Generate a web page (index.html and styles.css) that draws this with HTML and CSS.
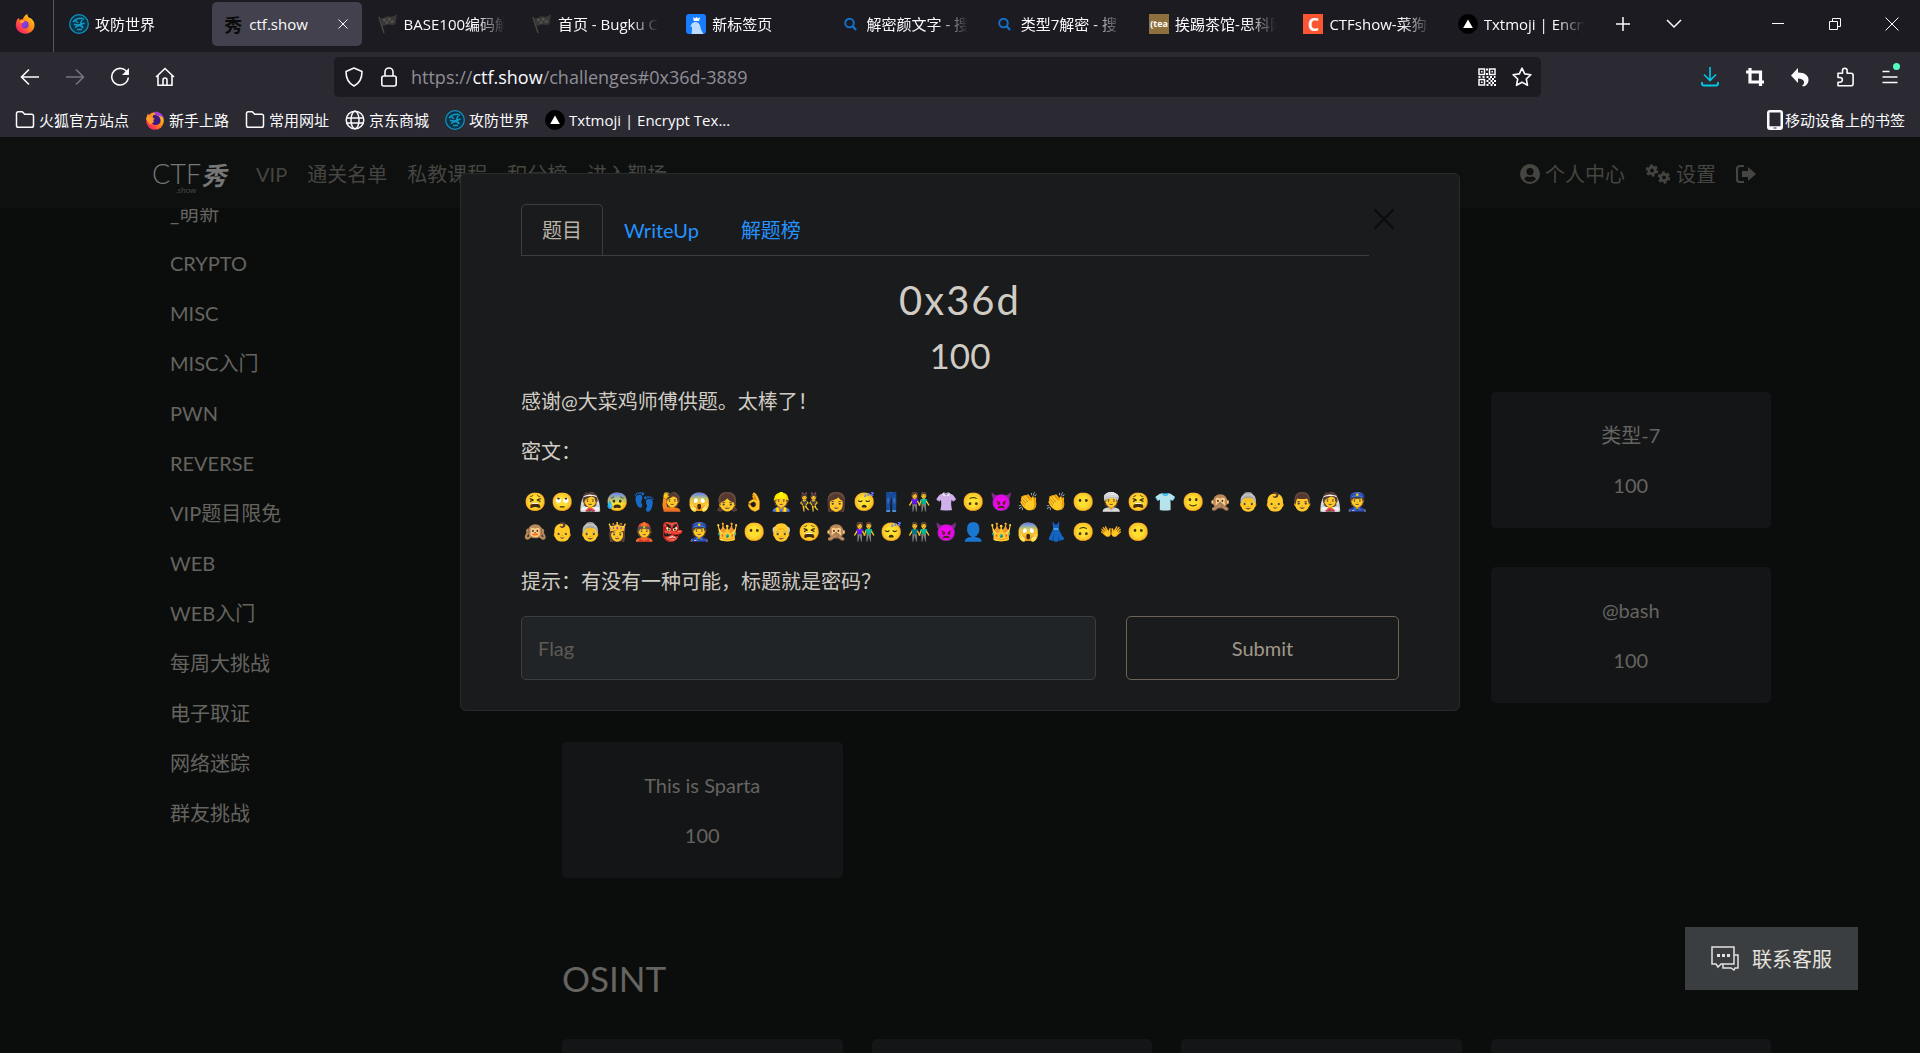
FILE: index.html
```html
<!DOCTYPE html>
<html lang="zh-CN">
<head>
<meta charset="utf-8">
<title>ctf.show</title>
<link rel="stylesheet" href="styles.css">
</head>
<body>
<svg class="defs" aria-hidden="true">
  <defs>
    <linearGradient id="fire" x1="1" y1="0" x2="0" y2="1"><stop offset="0" stop-color="#ffe226"/><stop offset=".45" stop-color="#ff8a16"/><stop offset=".75" stop-color="#ff3750"/><stop offset="1" stop-color="#e31587"/></linearGradient>
    <linearGradient id="violet" x1="0" y1="0" x2="1" y2="1"><stop offset="0" stop-color="#b833e1"/><stop offset="1" stop-color="#5b3fd0"/></linearGradient>
  </defs>
  <symbol id="i-firefox" viewBox="0 0 20 20"><path fill="url(#fire)" d="M12.500 0c-.3 1.500.4 2.700 1.600 3.800 2.700.600 5.400 3.500 5.400 7.200 0 4.800-4 8.800-9.200 8.800S.800 15.800.800 11c0-3 1-5.300 2.700-7.200.2 1 .5 1.500 1 2 .8-.6 2-.8 3.300-.6C8.600 2.800 10.300.9 12.500 0z"/><circle cx="10" cy="10.800" r="3.700" fill="url(#violet)"/><path fill="#ffb72b" d="M5 7.500c1.500-1 3.300-.8 4.600.2-1.500.2-2 1.300-3.100 1.600z"/></symbol>
  <symbol id="i-firefox-round" viewBox="0 0 20 20"><circle cx="10" cy="11" r="8.800" fill="url(#fire)"/><path fill="#3b1d82" d="M8 5.500c4-1.500 8 1.500 7.500 6-.5 3-4 4.500-7 3-2.500-1.500-2.500-4-1-5.500z"/><path fill="#a53bd8" d="M11 1.500c4.500.6 7.500 3.700 8 7.500-2-2.800-4.500-3.500-7-3.500C9 5.500 9 2.500 11 1.500z"/><path fill="#ff9a2b" d="M3 3c0 2 1 3 3 3.500L10 9c-2 0-2 1.800-1 2.700L5 15 1 9z"/></symbol>
  <symbol id="i-world" viewBox="0 0 20 20"><circle cx="10" cy="10" r="9.300" fill="#0a3346" stroke="#0f8fbd" stroke-width="1.300"/><path d="M4 8c3-4 8-4.500 11-2.500M5 10c3 1.800 7 .8 10.500-1M6 13.500c3-2.500 6-2.500 8.500 0M5.500 6l3.500 3M13 6l-2 5 3 3M8 15.500h5" fill="none" stroke="#139cc9" stroke-width="1.500"/></symbol>
  <symbol id="i-flag" viewBox="0 0 20 20"><path d="M1 3l5 16" stroke="#474640" stroke-width="1.500"/><path fill="#393836" d="M2.500 4c3 1.500 6-3 9-1.500 2.500 1 5-1 7.500-2l-1.500 9.500c-3 2-5 .5-7 .5-2.500 0-4 2-6 1.500z"/><path fill="#55544f" d="M5 5l2.500-.5.500 2.500-2.500.5zM10 4h2.500v2.500L10 6.500zM7.500 8l2.500-1 .5 2-2.500 1zM13 6.500l3-.5-.5 2.500-3 .5z"/></symbol>
  <symbol id="i-newtab" viewBox="0 0 20 20"><rect width="20" height="20" rx="3" fill="#187cff"/><path fill="#fff" d="M7 3l2 1.500L10.500 3 12 4.500 14 3l-.8 4H7.800z"/><path fill="#bcdcff" d="M5 11.500c.8-4.500 7.500-5 9 0 .6 3 1 5 3.500 8.500H5.500c.5-2 .5-4 .5-7.500l-2 .2z"/></symbol>
  <symbol id="i-search" viewBox="0 0 20 20"><circle cx="8.500" cy="9" r="4.300" fill="none" stroke="#1272cc" stroke-width="1.900"/><path d="M11.500 12l3.500 4" stroke="#1272cc" stroke-width="2.200"/></symbol>
  <symbol id="i-moji" viewBox="0 0 20 20"><circle cx="10" cy="10" r="10" fill="#000"/><path d="M10 5.500l4.800 8.500H5.200z" fill="#fff"/></symbol>
  <symbol id="i-folder" viewBox="0 0 20 20"><path d="M1.500 15.500v-12a1.800 1.800 0 0 1 1.800-1.800h4l2.400 2.600h7a1.800 1.800 0 0 1 1.800 1.800v9.400a1.800 1.800 0 0 1-1.800 1.800H3.300a1.800 1.800 0 0 1-1.800-1.800z" fill="none" stroke="currentColor" stroke-width="1.500"/></symbol>
  <symbol id="i-globe" viewBox="0 0 20 20"><g fill="none" stroke="currentColor" stroke-width="1.500"><circle cx="10" cy="10" r="8.800"/><ellipse cx="10" cy="10" rx="4" ry="8.800"/><path d="M1.500 8h17M1.500 13h17"/></g></symbol>
</svg>

<header class="chrome">
  <div class="tabstrip">
    <button class="pinned" aria-label="Firefox"><svg class="ico"><use href="#i-firefox"/></svg></button>
    <nav class="tabs">
      <button class="tab"><svg class="ico"><use href="#i-world"/></svg><span>攻防世界</span></button>
      <button class="tab active"><i class="brush">秀</i><span>ctf.show</span><svg class="tab-x" viewBox="0 0 10 10"><path d="M.5.5l9 9M9.500.5l-9 9" stroke="currentColor"/></svg></button>
      <button class="tab"><svg class="ico"><use href="#i-flag"/></svg><span>BASE100编码解</span></button>
      <button class="tab"><svg class="ico"><use href="#i-flag"/></svg><span>首页 - Bugku C</span></button>
      <button class="tab"><svg class="ico"><use href="#i-newtab"/></svg><span>新标签页</span></button>
      <button class="tab"><svg class="ico"><use href="#i-search"/></svg><span>解密颜文字 - 搜</span></button>
      <button class="tab"><svg class="ico"><use href="#i-search"/></svg><span>类型7解密 - 搜</span></button>
      <button class="tab"><b class="tea">(tea</b><span>挨踢茶馆-思科网</span></button>
      <button class="tab"><b class="cee">C</b><span>CTFshow-菜狗</span></button>
      <button class="tab"><svg class="ico"><use href="#i-moji"/></svg><span>Txtmoji | Encry</span></button>
    </nav>
    <div class="window-tools">
      <button aria-label="新建标签页"><svg class="ico" viewBox="0 0 20 20"><path d="M10 3v14M3 10h14" stroke="currentColor" stroke-width="1.500"/></svg></button>
      <button aria-label="列出所有标签页"><svg class="ico" viewBox="0 0 20 20"><path d="M3 6l7 7 7-7" fill="none" stroke="currentColor" stroke-width="1.500"/></svg></button>
      <span class="grow"></span>
      <button class="win" aria-label="最小化"><svg class="ico" viewBox="0 0 20 20"><path d="M4 9.500h12" stroke="currentColor"/></svg></button>
      <button class="win" aria-label="还原"><svg class="ico" viewBox="0 0 20 20"><path d="M4.500 7.500h8v8h-8zM7.500 7V4.500h8v8H13" fill="none" stroke="currentColor"/></svg></button>
      <button class="win" aria-label="关闭"><svg class="ico" viewBox="0 0 20 20"><path d="M3.500 3.500l13 13M16.500 3.500l-13 13" stroke="currentColor"/></svg></button>
    </div>
  </div>

  <div class="toolbar">
    <div class="nav-buttons">
      <button aria-label="后退"><svg class="ico" viewBox="0 0 20 20"><path d="M19 10H2M9 2.500L1.500 10 9 17.500" fill="none" stroke="currentColor" stroke-width="1.600"/></svg></button>
      <button class="dim" aria-label="前进"><svg class="ico" viewBox="0 0 20 20"><path d="M1 10h17M11 2.500l7.500 7.500-7.500 7.500" fill="none" stroke="currentColor" stroke-width="1.600"/></svg></button>
      <button aria-label="刷新"><svg class="ico" viewBox="0 0 20 20"><path d="M17.500 6A8.300 8.300 0 1 0 18.300 10.500" fill="none" stroke="currentColor" stroke-width="1.600"/><path d="M19 1v7h-7z" fill="currentColor"/></svg></button>
      <button aria-label="主页"><svg class="ico" viewBox="0 0 20 20"><path d="M1 10l9-8.500 9 8.500M3 8.500v9.700h14V8.500M8 18v-5a2 2 0 0 1 4 0v5" fill="none" stroke="currentColor" stroke-width="1.600"/></svg></button>
    </div>
    <div class="urlbar">
      <svg class="ico" viewBox="0 0 20 20"><path d="M10 1l8 3.500c0 7-2 11.500-8 14.500C4 16 2 11.500 2 4.500z" fill="none" stroke="currentColor" stroke-width="1.600" stroke-linejoin="round"/></svg>
      <svg class="ico" viewBox="0 0 20 20"><rect x="2.800" y="9" width="14.400" height="10" rx="2" fill="none" stroke="currentColor" stroke-width="1.600"/><path d="M6 9V5a4 4 0 0 1 8 0v4" fill="none" stroke="currentColor" stroke-width="1.600"/></svg>
      <a class="url" href="#0x36d-3889">https://<b>ctf.show</b>/challenges#0x36d-3889</a>
      <svg class="ico" viewBox="0 0 20 20"><g fill="none" stroke="currentColor" stroke-width="1.500"><path d="M2 2h5.500v5.500H2zM12.500 2H18v5.500h-5.500zM2 12.500h5.500V18H2z"/></g><path fill="currentColor" d="M4 4h1.500v1.500H4zM14.500 4H16v1.500h-1.500zM4 14.500h1.500V16H4zM9 1.500h2v2H9zM9 6h2v2H9zM1.500 9h2v2h-2zM5.500 9h2v2h-2zM9.500 9h2v2h-2zM13 9h2v2h-2zM17 9h1.500v2H17zM11.500 11h2v2h-2zM15 11h2v2h-2zM9.500 13h2v2h-2zM13.500 13h2v2h-2zM17 13h2v2h-2zM11.500 15h2v2h-2zM15 15h2v2h-2zM9.500 17h2v2h-2zM13.500 17h2v2h-2zM17 17h2v2h-2z"/></svg>
      <svg class="ico" viewBox="0 0 20 20"><path d="M10 1.200l2.700 5.700 6.200.8-4.600 4.300 1.200 6.300-5.500-3.100-5.500 3.100L5.700 12 1.100 7.700l6.200-.8z" fill="none" stroke="currentColor" stroke-width="1.600" stroke-linejoin="round"/></svg>
    </div>
    <div class="nav-buttons tools">
      <button class="cyan" aria-label="下载"><svg class="ico" viewBox="0 0 20 20"><path d="M10 0v13M4 7.500l6 6 6-6" fill="none" stroke="currentColor" stroke-width="1.600"/><path d="M2 15v1.500a2 2 0 0 0 2 2h12a2 2 0 0 0 2-2V15" fill="none" stroke="currentColor" stroke-width="1.900"/></svg></button>
      <button aria-label="截图"><svg class="ico" viewBox="0 0 20 20"><path d="M1 5h14.500v14M5 1v14h14" fill="none" stroke="currentColor" stroke-width="3.200"/></svg></button>
      <button aria-label="撤销"><svg class="ico" viewBox="0 0 20 20"><path fill="currentColor" d="M8 1v4.500c7 0 11 3.500 10.500 8-.2 2.300-1.700 4.300-3.500 5.500-1.500.5-2.500.2-3-.3 3.500-1.700 3-7.200-4-7.200V16L1 8.500z"/></svg></button>
      <button aria-label="扩展"><svg class="ico" viewBox="0 0 20 20"><path d="M3 9V6.200h4.500V3.500a2.300 2.300 0 0 1 4.600 0v2.700h4a2 2 0 0 1 2 2v8.500a2 2 0 0 1-2 2H3v-3.500h2a2.300 2.300 0 0 0 0-4.700H3z" fill="none" stroke="currentColor" stroke-width="1.600" stroke-linejoin="round"/></svg></button>
      <button class="menu" aria-label="菜单"><svg class="ico" viewBox="0 0 20 20"><path d="M2.500 4.500h7M2.500 10h15M2.500 15.500h15" stroke="currentColor" stroke-width="1.600"/></svg></button>
    </div>
  </div>

  <nav class="bookmarks">
    <a href="#"><svg class="ico"><use href="#i-folder"/></svg>火狐官方站点</a>
    <a href="#"><svg class="ico"><use href="#i-firefox-round"/></svg>新手上路</a>
    <a href="#"><svg class="ico"><use href="#i-folder"/></svg>常用网址</a>
    <a href="#"><svg class="ico"><use href="#i-globe"/></svg>京东商城</a>
    <a href="#"><svg class="ico"><use href="#i-world"/></svg>攻防世界</a>
    <a href="#"><svg class="ico"><use href="#i-moji"/></svg>Txtmoji | Encrypt Tex...</a>
    <a class="mobile" href="#"><svg class="phone" viewBox="0 0 16 20"><path fill="currentColor" fill-rule="evenodd" d="M3 0h10a3 3 0 0 1 3 3v14a3 3 0 0 1-3 3H3a3 3 0 0 1-3-3V3a3 3 0 0 1 3-3zm-.5 2.500v13.800h11V2.500zM6.500 17.500v1h3v-1z"/></svg>移动设备上的书签</a>
  </nav>
</header>

<div class="viewport">
  <nav class="site-nav">
    <a class="logo" href="#">CTF<i class="brush">秀</i><small>.show</small></a>
    <a href="#">VIP</a><a href="#">通关名单</a><a href="#">私教课程</a><a href="#">积分榜</a><a href="#">进入靶场</a>
    <span class="grow"></span>
    <a class="with-icon" href="#"><svg class="ico" viewBox="0 0 20 20"><path fill="currentColor" fill-rule="evenodd" d="M10 0a10 10 0 1 1 0 20 10 10 0 0 1 0-20zm0 4a3.600 3.600 0 1 0 0 7.200A3.600 3.600 0 0 0 10 4zM4.200 15.200c3 3.400 8.600 3.400 11.600 0-.6-1.700-1.800-2.700-3.300-2.700-1.600.6-3.400.6-5 0-1.500 0-2.700 1-3.300 2.700z"/></svg>个人中心</a>
    <a class="with-icon" href="#"><svg class="cogs" viewBox="0 0 26 20"><g fill="none" stroke="currentColor"><circle cx="7" cy="6.500" r="3.300" stroke-width="2.800"/><circle cx="7" cy="6.500" r="5.300" stroke-width="2" stroke-dasharray="2.800 2.750"/><circle cx="19" cy="13.500" r="3.300" stroke-width="2.800"/><circle cx="19" cy="13.500" r="5.300" stroke-width="2" stroke-dasharray="2.800 2.750"/></g></svg>设置</a>
    <a href="#" aria-label="退出"><svg class="ico" viewBox="0 0 20 20"><path d="M8 2H4a3 3 0 0 0-3 3v10a3 3 0 0 0 3 3h4" fill="none" stroke="currentColor" stroke-width="2.200"/><path fill="currentColor" d="M12 3l8 7-8 7v-4H6V7h6z"/></svg></a>
  </nav>

  <div class="page">
    <ul class="categories">
      <li><a href="#">_萌新</a></li><li><a href="#">CRYPTO</a></li><li><a href="#">MISC</a></li><li><a href="#">MISC入门</a></li><li><a href="#">PWN</a></li><li><a href="#">REVERSE</a></li><li><a href="#">VIP题目限免</a></li><li><a href="#">WEB</a></li><li><a href="#">WEB入门</a></li><li><a href="#">每周大挑战</a></li><li><a href="#">电子取证</a></li><li><a href="#">网络迷踪</a></li><li><a href="#">群友挑战</a></li>
    </ul>
    <main class="board">
      <div class="cards">
        <button class="card last"><span>类型-7</span><span>100</span></button>
        <button class="card last"><span>@bash</span><span>100</span></button>
        <button class="card"><span>This is Sparta</span><span>100</span></button>
      </div>
      <h3>OSINT</h3>
      <div class="cards">
        <div class="card"></div><div class="card"></div><div class="card"></div><div class="card"></div>
      </div>
    </main>
  </div>

  <section class="modal" role="dialog" aria-label="0x36d">
    <button class="close" aria-label="关闭"><svg class="ico" viewBox="0 0 20 20"><path d="M1 1l18 18M19 1L1 19" stroke="currentColor" stroke-width="2.200" stroke-linecap="round"/></svg></button>
    <div class="modal-main">
      <nav class="modal-tabs"><a class="current" href="#">题目</a><a href="#">WriteUp</a><a href="#">解题榜</a></nav>
    </div>
    <h2>0x36d</h2>
    <h3>100</h3>
    <p>感谢@大菜鸡师傅供题。太棒了！</p>
    <p>密文：</p>
    <p class="emoji"><span>😫</span><span>🙄</span><span>👰</span><span>😰</span><span>👣</span><span>🙋</span><span>😱</span><span>👧</span><span>👌</span><span>👷</span><span>👯</span><span>👩</span><span>😴</span><span>👖</span><span>👫</span><span>👚</span><span>🙃</span><span>👿</span><span>👏</span><span>👏</span><span>😶</span><span>👳</span><span>😫</span><span>👕</span><span>🙂</span><span>🙊</span><span>👵</span><span>👶</span><span>👨</span><span>👰</span><span>👮</span><span>🙉</span><span>👶</span><span>👵</span><span>👸</span><span>👲</span><span>👺</span><span>👮</span><span>👑</span><span>😶</span><span>👴</span><span>😫</span><span>🙊</span><span>👫</span><span>😴</span><span>👬</span><span>👿</span><span>👤</span><span>👑</span><span>😱</span><span>👗</span><span>🙃</span><span>👐</span><span>😶</span></p>
    <p>提示：有没有一种可能，标题就是密码？</p>
    <form class="answer"><input type="text" placeholder="Flag" aria-label="Flag"><button type="button">Submit</button></form>
  </section>

  <button class="support"><svg class="chat" viewBox="0 0 28 25"><path d="M1 1h22v17H10l-3 3-2-3H1zM23 9h4v13h-3l-1 2-3-2h-8v-4" fill="none" stroke="currentColor" stroke-width="1.500"/><path fill="currentColor" d="M6 8h3v3H6zM11 8h3v3h-3zM16 8h3v3h-3z"/></svg>联系客服</button>
</div>
</body>
</html>
```
FILE: styles.css
```css
* { box-sizing: border-box; }
body { margin: 0; height: 100vh; display: flex; flex-direction: column; background: #0b0d0c; overflow: hidden; font-family: Lato, "Noto Sans CJK SC", sans-serif; font-size: 20px; line-height: 30px; }
button { font: inherit; color: inherit; background: none; border: 0; padding: 0; }
a { color: inherit; text-decoration: none; }
h2, h3, p, ul { margin: 0; padding: 0; font-weight: 400; list-style: none; }
.defs { position: absolute; width: 0; height: 0; }
.ico { width: 20px; height: 20px; flex: none; display: block; }
.grow { flex: 1; }

/* browser chrome */
.chrome { flex: none; background: #2b2a33; color: #fbfbfe; font-family: "Open Sans", "Noto Sans CJK SC", sans-serif; font-size: 15px; line-height: 24px; }
.tabstrip { display: flex; align-items: center; height: 52px; background: #1c1b22; }
.pinned { width: 54px; height: 52px; padding: 0 0 4px 15px; border-right: 1px solid #57565e; }
.tabs { flex: 1; display: grid; grid-template-columns: repeat(10, 1fr); padding: 0 0 4px 4px; }
.tab { position: relative; display: flex; align-items: center; gap: 6px; height: 44px; margin-right: 5px; padding: 0 9px 0 11px; border-radius: 5px; overflow: hidden; white-space: nowrap; text-align: left; }
.tab span { flex: 1; overflow: hidden; mask-image: linear-gradient(to right, #000 70%, transparent 98%); }
.tab.active { background: #42414d; }
.tab.active span { mask-image: none; }
.tab-x { width: 10px; height: 10px; margin-right: 5px; flex: none; }
.brush { font-weight: 700; font-family: "Noto Sans CJK SC", sans-serif; }
.tab .brush { width: 20px; color: #0a0a0a; font-size: 18px; font-style: normal; text-align: center; }
.tea, .cee { width: 20px; height: 20px; line-height: 20px; text-align: center; color: #fff; flex: none; overflow: hidden; }
.tea { background: #8e6f3e; font-size: 9px; }
.cee { background: #fc5531; font-size: 18px; }
.window-tools { display: flex; align-items: center; width: 319px; padding: 0 18px 4px 12px; gap: 31px; }
.window-tools .win + .win { margin-left: 6px; }
.toolbar { display: flex; align-items: center; height: 50px; padding: 0 20px; }
.nav-buttons { display: flex; gap: 25px; width: 314px; }
.tools { width: 359px; justify-content: flex-end; }
.dim { color: #76757d; }
.cyan { color: #00c8e6; }
.menu { position: relative; }
.menu::after { content: ""; position: absolute; right: 0; top: -4px; width: 7px; height: 7px; border-radius: 50%; background: #54ffbd; }
.urlbar { flex: 1; display: flex; align-items: center; gap: 15px; height: 40px; padding: 0 9px 0 10px; border-radius: 5px; background: #1c1b22; }
.url { flex: 1; margin-left: -3px; font-size: 18px; color: #8f8e96; }
.url b { font-weight: 400; color: #fbfbfe; }
.bookmarks { display: flex; align-items: center; gap: 16px; height: 35px; padding: 0 15px; }
.bookmarks a { display: flex; align-items: center; gap: 4px; }
.bookmarks .mobile { margin-left: auto; gap: 2px; }
.phone { width: 16px; height: 20px; }

/* web page */
.viewport { position: relative; flex: 1; overflow: hidden; }
.site-nav { position: relative; z-index: 1; display: flex; align-items: center; gap: 20px; height: 71px; padding: 2px 164px 0 152px; background: #0e100f; color: #454541; }
.logo { position: relative; display: flex; align-items: center; width: 84px; font-size: 27px; line-height: 24px; font-weight: 300; color: #777; }
.logo .brush { font-size: 25px; }
.logo small { position: absolute; left: 24px; top: 24px; font-size: 8px; line-height: 8px; }
.with-icon { display: flex; align-items: center; gap: 5px; }
.cogs { width: 26px; height: 20px; }
.page { display: flex; gap: 20px; margin-top: -20px; padding: 0 149px 0 170px; color: #656460; }
.categories { width: 372px; flex: none; }
.categories li { height: 50px; padding: 10px 0; }
.board { flex: 1; padding-top: 204px; }
.cards { display: grid; grid-template-columns: repeat(4, 1fr); gap: 39px 29px; }
.card { display: flex; flex-direction: column; align-items: center; gap: 20px; min-height: 136px; padding: 28px; border-radius: 5px; background: #141517; }
.card.last { grid-column: 4; }
.board h3 { margin: 79px 0 39px; font-size: 35px; line-height: 43px; }

.modal { position: absolute; z-index: 2; top: 36px; left: 50%; width: 1000px; margin-left: -500px; padding: 30px 60px; border: 1px solid #292b2b; border-radius: 6px; background: #1a1b1d; color: #d0ccc4; }
.close { position: absolute; right: 65px; top: 35px; color: #0b0c0c; }
.modal-main { padding-right: 30px; }
.modal-tabs { display: flex; border-bottom: 1px solid #3a3e40; color: #2492ff; }
.modal-tabs a { padding: 10px 20px; border: 1px solid transparent; border-bottom: 0; }
.modal-tabs .current { border-color: #3a3e40; border-radius: 5px 5px 0 0; color: #b9b3a8; }
.modal h2 { margin: 20px 0 10px; font-size: 40px; line-height: 48px; letter-spacing: 2px; text-align: center; }
.modal h3 { margin-bottom: 10px; font-size: 35px; line-height: 42px; text-align: center; }
.modal p { margin-bottom: 20px; }
.modal .emoji { display: grid; grid-template-columns: repeat(31, 1fr); margin-right: 28px; font-size: 18px; text-align: center; }
.answer { display: grid; grid-template-columns: 575fr 273fr; gap: 30px; }
.answer input, .answer button { height: 64px; border-radius: 5px; font: inherit; }
.answer input { width: 100%; padding: 0 16px; border: 1px solid #3a3e40; background: #202427; color: #d0ccc4; }
.answer input::placeholder { color: #5e5b55; opacity: 1; }
.answer button { border: 1px solid #6c6455; color: #a09888; }
.support { position: absolute; right: 62px; bottom: 63px; display: flex; align-items: center; gap: 13px; height: 63px; padding: 0 26px; background: #3a3e40; color: #e4e2de; }
.chat { width: 28px; height: 25px; }
```
